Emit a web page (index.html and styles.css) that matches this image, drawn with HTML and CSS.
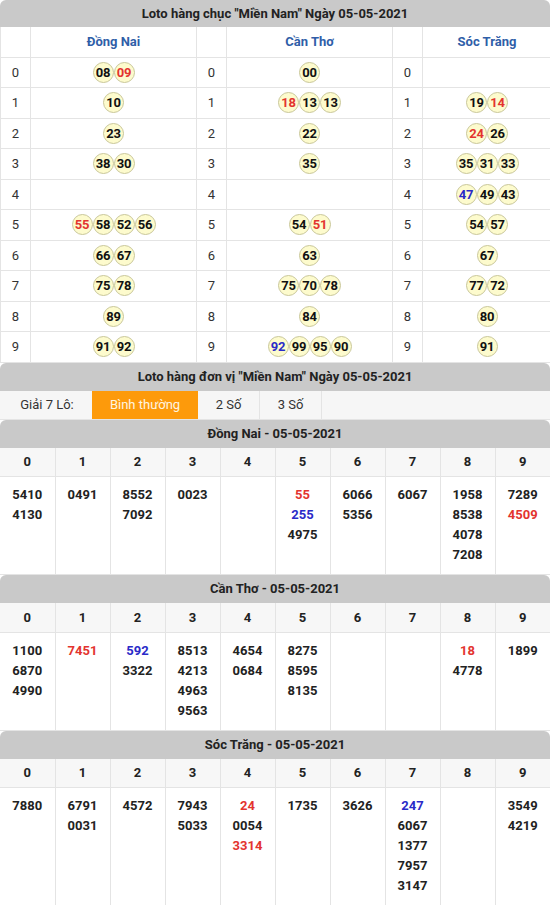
FILE: index.html
```html
<!DOCTYPE html>
<html lang="vi">
<head>
<meta charset="utf-8">
<title>Loto Miền Nam</title>
<link rel="stylesheet" href="styles.css">
</head>
<body>
<div class="box">
  <div class="head h1">Loto hàng chục "Miền Nam" Ngày 05-05-2021</div>
  <table class="chuc">
    <colgroup><col class="cn"><col class="cw"><col class="cn"><col class="cw"><col class="cn"><col class="cw3"></colgroup>
    <tr class="prov"><th></th><th>Đồng Nai</th><th></th><th>Cần Thơ</th><th></th><th>Sóc Trăng</th></tr>
    <tr><td class="d">0</td><td><span class="b">08</span><span class="b r">09</span></td><td class="d">0</td><td><span class="b">00</span></td><td class="d">0</td><td></td></tr>
    <tr><td class="d">1</td><td><span class="b">10</span></td><td class="d">1</td><td><span class="b r">18</span><span class="b">13</span><span class="b">13</span></td><td class="d">1</td><td><span class="b">19</span><span class="b r">14</span></td></tr>
    <tr><td class="d">2</td><td><span class="b">23</span></td><td class="d">2</td><td><span class="b">22</span></td><td class="d">2</td><td><span class="b r">24</span><span class="b">26</span></td></tr>
    <tr><td class="d">3</td><td><span class="b">38</span><span class="b">30</span></td><td class="d">3</td><td><span class="b">35</span></td><td class="d">3</td><td><span class="b">35</span><span class="b">31</span><span class="b">33</span></td></tr>
    <tr><td class="d">4</td><td></td><td class="d">4</td><td></td><td class="d">4</td><td><span class="b u">47</span><span class="b">49</span><span class="b">43</span></td></tr>
    <tr><td class="d">5</td><td><span class="b r">55</span><span class="b">58</span><span class="b">52</span><span class="b">56</span></td><td class="d">5</td><td><span class="b">54</span><span class="b r">51</span></td><td class="d">5</td><td><span class="b">54</span><span class="b">57</span></td></tr>
    <tr><td class="d">6</td><td><span class="b">66</span><span class="b">67</span></td><td class="d">6</td><td><span class="b">63</span></td><td class="d">6</td><td><span class="b">67</span></td></tr>
    <tr><td class="d">7</td><td><span class="b">75</span><span class="b">78</span></td><td class="d">7</td><td><span class="b">75</span><span class="b">70</span><span class="b">78</span></td><td class="d">7</td><td><span class="b">77</span><span class="b">72</span></td></tr>
    <tr><td class="d">8</td><td><span class="b">89</span></td><td class="d">8</td><td><span class="b">84</span></td><td class="d">8</td><td><span class="b">80</span></td></tr>
    <tr><td class="d">9</td><td><span class="b">91</span><span class="b">92</span></td><td class="d">9</td><td><span class="b u">92</span><span class="b">99</span><span class="b">95</span><span class="b">90</span></td><td class="d">9</td><td><span class="b">91</span></td></tr>
  </table>

  <div class="head">Loto hàng đơn vị "Miền Nam" Ngày 05-05-2021</div>
  <div class="tabs">
    <span class="lbl">Giải 7 Lô:</span>
    <span class="tab on">Bình thường</span>
    <span class="tab">2 Số</span>
    <span class="tab">3 Số</span>
  </div>

  <div class="head">Đồng Nai - 05-05-2021</div>
  <table class="dv">
    <tr class="dh"><th>0</th><th>1</th><th>2</th><th>3</th><th>4</th><th>5</th><th>6</th><th>7</th><th>8</th><th>9</th></tr>
    <tr>
      <td>5410<br>4130</td>
      <td>0491</td>
      <td>8552<br>7092</td>
      <td>0023</td>
      <td></td>
      <td><span class="r">55</span><br><span class="u">255</span><br>4975</td>
      <td>6066<br>5356</td>
      <td>6067</td>
      <td>1958<br>8538<br>4078<br>7208</td>
      <td>7289<br><span class="r">4509</span></td>
    </tr>
  </table>

  <div class="head">Cần Thơ - 05-05-2021</div>
  <table class="dv">
    <tr class="dh"><th>0</th><th>1</th><th>2</th><th>3</th><th>4</th><th>5</th><th>6</th><th>7</th><th>8</th><th>9</th></tr>
    <tr>
      <td>1100<br>6870<br>4990</td>
      <td><span class="r">7451</span></td>
      <td><span class="u">592</span><br>3322</td>
      <td>8513<br>4213<br>4963<br>9563</td>
      <td>4654<br>0684</td>
      <td>8275<br>8595<br>8135</td>
      <td></td>
      <td></td>
      <td><span class="r">18</span><br>4778</td>
      <td>1899</td>
    </tr>
  </table>

  <div class="head">Sóc Trăng - 05-05-2021</div>
  <table class="dv">
    <tr class="dh"><th>0</th><th>1</th><th>2</th><th>3</th><th>4</th><th>5</th><th>6</th><th>7</th><th>8</th><th>9</th></tr>
    <tr>
      <td>7880</td>
      <td>6791<br>0031</td>
      <td>4572</td>
      <td>7943<br>5033</td>
      <td><span class="r">24</span><br>0054<br><span class="r">3314</span></td>
      <td>1735</td>
      <td>3626</td>
      <td><span class="u">247</span><br>6067<br>1377<br>7957<br>3147</td>
      <td></td>
      <td>3549<br>4219</td>
    </tr>
  </table>
</div>
</body>
</html>
```

FILE: styles.css
```css
* { box-sizing: border-box; }
html, body { margin: 0; padding: 0; background: #fff; }
body {
  font-family: Roboto, "Liberation Sans", Arial, sans-serif;
  font-size: 13px;
  color: #222;
}
.box { width: 550px; }
.head {
  background: #c9c9c9;
  border-radius: 6px 6px 0 0;
  height: 28px;
  line-height: 28px;
  text-align: center;
  font-weight: bold;
  font-size: 13px;
  color: #222;
}
.head.h1 { height: 27px; line-height: 27px; }
table { border-collapse: collapse; width: 550px; table-layout: fixed; }
td, th { border: 1px solid #e4e4e4; padding: 0; }
.chuc tr:first-child th { border-top: 0; }
.chuc col.cn { width: 30px; }
.chuc col.cw { width: 166px; }
.chuc col.cw3 { width: 129px; }
.chuc td { height: 30.5px; text-align: center; vertical-align: middle; font-size: 0; }
.chuc .prov th { height: 30px; color: #2f5ea8; font-weight: bold; font-size: 13px; }
.chuc td.d { font-size: 13px; color: #333; }
.b {
  display: inline-block;
  width: 21px;
  height: 21px;
  line-height: 19px;
  border-radius: 50%;
  border: 1px solid #c9c79a;
  background: #fdfbcd;
  font-size: 13px;
  font-weight: bold;
  color: #111;
  text-align: center;
  vertical-align: middle;
  letter-spacing: -0.2px;
}
.b.r, .r { color: #e3342f; }
.b.u, .u { color: #2a2ac8; }
.tabs {
  display: flex;
  height: 29px;
  background: #f6f6f6;
  border-bottom: 1px solid #e4e4e4;
  font-size: 13px;
  color: #333;
}
.lbl { width: 92px; display: flex; align-items: center; justify-content: center; padding-left: 2px; }
.tab {
  display: flex; align-items: center; justify-content: center;
  width: 62px; border-right: 1px solid #e4e4e4;
}
.tab.on { width: 106px; background: #fd9a0b; color: #fff5e0; border-right: 0; }
.dv th {
  height: 29px;
  background: #f7f7f7;
  font-weight: bold;
  font-size: 13px;
  color: #222;
  border-top: 0;
}
.dv td {
  vertical-align: top;
  text-align: center;
  font-weight: bold;
  font-size: 13px;
  line-height: 20px;
  padding: 8px 0 9px;
  color: #222;
}
.dv th:first-child, .dv td:first-child { border-left: 0; }
.dv th:last-child, .dv td:last-child { border-right: 0; }
```
